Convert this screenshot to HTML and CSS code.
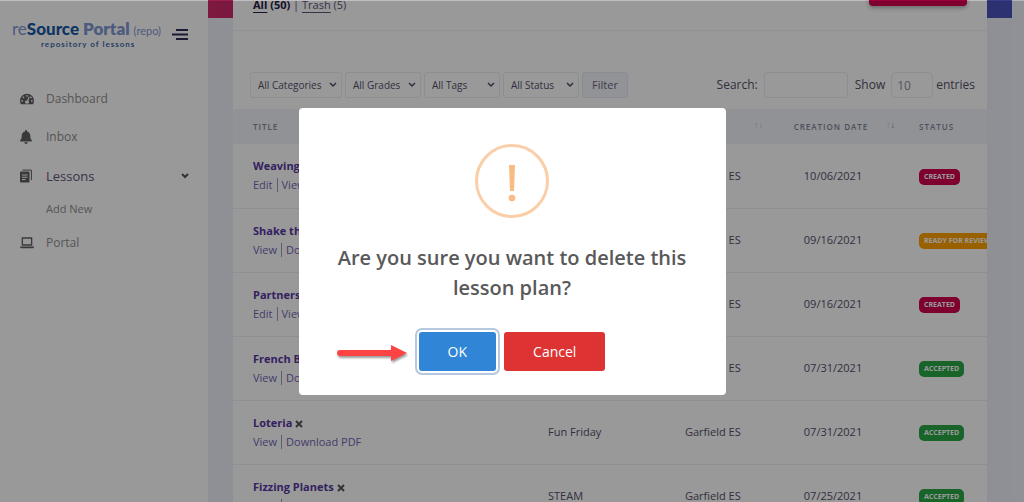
FILE: index.html
```html
<!DOCTYPE html>
<html lang="en">
<head>
    <meta charset="UTF-8">
    <meta name="viewport" content="width=device-width, initial-scale=1.0">
    <title>reSource Portal - Lessons</title>
    <link rel="stylesheet" href="styles.css">
</head>
<body>
    <div class="page">
        <aside class="sidebar">
            <div class="brand">
                <a class="logo" href="#">
                    <span class="logo-name"><span class="logo-re">re<b class="logo-source">Source</b></span><b class="logo-portal">Portal</b><span class="logo-repo">(repo)</span></span>
                    <span class="logo-tag">repository of lessons</span>
                </a>
                <button class="menu-toggle" type="button" aria-label="Toggle menu">
                    <svg width="16" height="11" viewBox="0 0 16 11"><path d="M4 1h12M0 5.500h16M4 10h12" stroke="currentColor" stroke-width="2" fill="none"/></svg>
                </button>
            </div>
            <nav class="nav">
                <a class="nav-link" href="#">
                    <svg class="nav-icon" viewBox="0 0 16 16"><path fill="currentColor" fill-rule="evenodd" d="M8 2a8 8 0 0 0-8 8c0 1.500.4 2.900 1.100 4h13.800A8 8 0 0 0 8 2zM8 3.300a1 1 0 1 1 0 2 1 1 0 0 1 0-2zM3.900 5a1 1 0 1 1 0 2 1 1 0 0 1 0-2zM2.500 9a1 1 0 1 1 0 2 1 1 0 0 1 0-2zM13.500 9a1 1 0 1 1 0 2 1 1 0 0 1 0-2zM12.500 5a1 1 0 0 1 0 2 1 1 0 0 1 0-2zM10 5l1 .4-1.500 4.800A2 2 0 0 1 9.800 13H6.200a2 2 0 0 1 2-3.200z"/></svg>
                    Dashboard
                </a>
                <a class="nav-link" href="#">
                    <svg class="nav-icon nav-icon-sm" viewBox="0 0 12 14"><path fill="currentColor" d="M6 0a1 1 0 0 1 1 1v.5c2 .4 3.300 2 3.300 4.200 0 2.600.6 3.600 1.500 4.500.4.500 0 1.300-.6 1.300H.8c-.6 0-1-.8-.6-1.300.9-.9 1.500-1.900 1.500-4.500C1.700 3.500 3 1.900 5 1.500V1a1 1 0 0 1 1-1zM4.300 12.300h3.400a1.700 1.700 0 0 1-3.400 0z"/></svg>
                    Inbox
                </a>
                <a class="nav-link nav-link-active" href="#">
                    <svg class="nav-icon nav-icon-sm" viewBox="0 0 12 13"><path d="M2.500.6h8.900v10" stroke="currentColor" fill="none"/><path fill="currentColor" fill-rule="evenodd" d="M1 2h7.500a1 1 0 0 1 1 1v9a1 1 0 0 1-1 1H1a1 1 0 0 1-1-1V3a1 1 0 0 1 1-1zM2 5v1h5.500V5zM2 7.200v1h5.500v-1zM2 9.400v1h3.500v-1z"/></svg>
                    Lessons
                    <svg class="nav-arrow" width="8" height="6" viewBox="0 0 8 6"><path d="M1 1l3 3 3-3" stroke="currentColor" stroke-width="2" fill="none"/></svg>
                </a>
                <a class="nav-sub" href="#">Add New</a>
                <a class="nav-link" href="#">
                    <svg class="nav-icon" viewBox="0 0 16 13"><path d="M2.700.8h10.600v8H2.700z" stroke="currentColor" stroke-width="1.500" fill="none"/><path fill="currentColor" d="M0 10.500h16v.7a1.300 1.300 0 0 1-1.300 1.300H1.300A1.300 1.300 0 0 1 0 11.200z"/></svg>
                    Portal
                </a>
            </nav>
        </aside>

        <main class="content">
            <section class="card">
                <header class="card-head">
                    <div class="views"><a class="current" href="#">All</a> <b>(50)</b> <span class="bar">|</span> <a href="#">Trash</a> (5)</div>
                    <button class="btn-add" type="button" aria-label="Add New Lesson"></button>
                </header>

                <form class="toolbar">
                    <div class="filters">
                        <select class="control select-wide" aria-label="Category"><option>All Categories</option></select>
                        <select class="control" aria-label="Grade"><option>All Grades</option></select>
                        <select class="control" aria-label="Tag"><option>All Tags</option></select>
                        <select class="control" aria-label="Status"><option>All Status</option></select>
                        <button class="btn-filter" type="button">Filter</button>
                    </div>
                    <div class="search">
                        <label for="search">Search:</label>
                        <input class="control control-search" id="search" type="text">
                        <label for="length">Show</label>
                        <input class="control control-length" id="length" type="text" value="10">
                        <span>entries</span>
                    </div>
                </form>

                <table class="lessons">
                    <colgroup>
                        <col>
                        <col class="col-category">
                        <col class="col-school">
                        <col class="col-date">
                        <col class="col-status">
                    </colgroup>
                    <thead>
                        <tr>
                            <th>Title</th>
                            <th>Category</th>
                            <th>School<span class="sort">↑↓</span></th>
                            <th class="date">Creation Date<span class="sort">↑<b>↓</b></span></th>
                            <th>Status</th>
                        </tr>
                    </thead>
                    <tbody>
                        <tr>
                            <td><a class="title" href="#">Weaving</a><div class="actions"><a href="#">Edit</a><a href="#">View</a></div></td>
                            <td>STEAM</td>
                            <td>Garfield ES</td>
                            <td class="date">10/06/2021</td>
                            <td><span class="badge badge-created">Created</span></td>
                        </tr>
                        <tr>
                            <td><a class="title" href="#">Shake the</a><div class="actions"><a href="#">View</a><a href="#">Download PDF</a></div></td>
                            <td></td>
                            <td>Garfield ES</td>
                            <td class="date">09/16/2021</td>
                            <td><span class="badge badge-review">Ready for review</span></td>
                        </tr>
                        <tr>
                            <td><a class="title" href="#">Partners</a><div class="actions"><a href="#">Edit</a><a href="#">View</a></div></td>
                            <td></td>
                            <td>Garfield ES</td>
                            <td class="date">09/16/2021</td>
                            <td><span class="badge badge-created">Created</span></td>
                        </tr>
                        <tr>
                            <td><a class="title" href="#">French B</a><div class="actions"><a href="#">View</a><a href="#">Download PDF</a></div></td>
                            <td>STEAM</td>
                            <td>Garfield ES</td>
                            <td class="date">07/31/2021</td>
                            <td><span class="badge badge-accepted">Accepted</span></td>
                        </tr>
                        <tr>
                            <td><a class="title" href="#">Loteria</a> <button class="remove" type="button" aria-label="Delete Loteria"><svg width="8" height="8" viewBox="0 0 8 8"><path d="M1 1l6 6M7 1L1 7" stroke="currentColor" stroke-width="2"/></svg></button><div class="actions"><a href="#">View</a><a href="#">Download PDF</a></div></td>
                            <td>Fun Friday</td>
                            <td>Garfield ES</td>
                            <td class="date">07/31/2021</td>
                            <td><span class="badge badge-accepted">Accepted</span></td>
                        </tr>
                        <tr>
                            <td><a class="title" href="#">Fizzing Planets</a> <button class="remove" type="button" aria-label="Delete Fizzing Planets"><svg width="8" height="8" viewBox="0 0 8 8"><path d="M1 1l6 6M7 1L1 7" stroke="currentColor" stroke-width="2"/></svg></button><div class="actions"><a href="#">View</a><a href="#">Download PDF</a></div></td>
                            <td>STEAM</td>
                            <td>Garfield ES</td>
                            <td class="date">07/25/2021</td>
                            <td><span class="badge badge-accepted">Accepted</span></td>
                        </tr>
                    </tbody>
                </table>
            </section>
        </main>
    </div>

    <div class="overlay">
        <div class="modal" role="dialog" aria-modal="true" aria-labelledby="modal-title">
            <svg class="modal-icon" width="74" height="74" viewBox="0 0 74 74">
                <circle cx="37" cy="37" r="35.500" fill="none" stroke="#facea8" stroke-width="3"/>
                <path d="M34 21h6l-1 26h-4z" fill="#f8bb86"/>
                <circle cx="37" cy="54" r="3.300" fill="#f8bb86"/>
            </svg>
            <h2 class="modal-title" id="modal-title">Are you sure you want to delete this lesson plan?</h2>
            <div class="modal-actions">
                <button class="btn btn-ok" type="button">OK</button>
                <button class="btn btn-cancel" type="button">Cancel</button>
            </div>
            <svg class="pointer" width="74" height="22" viewBox="0 0 74 22">
                <path d="M4 8h51V3l16 8-16 8v-5H4a3 3 0 0 1 0-6z" fill="#fd4343"/>
            </svg>
        </div>
    </div>
</body>
</html>
```

FILE: styles.css
```css
* {
    box-sizing: border-box;
}
body {
    margin: 0;
    font-family: "Open Sans", "Noto Sans", sans-serif;
    font-size: 11px;
    line-height: 16px;
    color: #54506a;
    background-color: #f1f2fa;
}
a {
    color: inherit;
    text-decoration: none;
}
button,
input,
select {
    font: inherit;
    color: inherit;
}
.page {
    display: flex;
    height: 100vh;
    overflow: hidden;
}

/* sidebar */
.sidebar {
    flex: 0 0 208px;
    background-color: #fff;
}
.brand {
    display: flex;
    align-items: center;
    gap: 12px;
    padding: 20px 12px 0;
}
.logo {
    display: flex;
    flex-direction: column;
    width: 148px;
    font-family: Lato, sans-serif;
    white-space: nowrap;
}
.logo-name {
    display: flex;
    align-items: baseline;
    gap: 4px;
    font-size: 17px;
    line-height: 18px;
    color: #7f97d3;
}
.logo-source {
    font-weight: 900;
    color: #1658a5;
}
.logo-portal {
    font-weight: 800;
}
.logo-repo {
    font-size: 11px;
}
.logo-tag {
    padding-left: 29px;
    font-size: 8px;
    font-weight: 700;
    line-height: 8px;
    letter-spacing: 1px;
    color: #3b6aa8;
}
.menu-toggle {
    display: flex;
    padding: 0;
    border: 0;
    background: none;
    color: #2a2f58;
}
.nav {
    display: flex;
    flex-direction: column;
    padding: 32px 19px 0 20px;
}
.nav-link {
    display: flex;
    align-items: center;
    gap: 12px;
    height: 38px;
    font-size: 12px;
    color: #8e8e8e;
}
.nav-icon {
    width: 14px;
    height: 14px;
    color: #606060;
}
.nav-icon-sm {
    width: 12px;
    margin-right: 2px;
}
.nav-link-active {
    height: 40px;
    font-size: 13px;
    color: #5c5679;
}
.nav-arrow {
    margin-left: auto;
    color: #55555c;
}
.nav-sub {
    padding: 5px 0 7px 26px;
    color: #8e8e8e;
}

/* scrolled content, colour band runs behind the card */
.content {
    flex: 1;
    min-width: 0;
    margin: -24px 12px 0 0;
    padding: 0 25px;
    background: linear-gradient(to right, #d1286a, #4753bd) no-repeat top / 100% 42px, #eff1fa;
}
.card {
    overflow: hidden;
    background-color: #fff;
}
.card-head {
    display: flex;
    justify-content: space-between;
    align-items: flex-start;
    height: 55px;
    padding: 0 20px;
    border-bottom: 1px solid #f2f2f7;
}
.views {
    padding-top: 21px;
    color: #5a5575;
}
.views a {
    text-decoration: underline;
    text-underline-offset: 3px;
}
.views .current,
.views b {
    font-weight: 700;
    color: #262043;
}
.btn-add {
    width: 98px;
    height: 30px;
    border: 0;
    border-radius: 4px;
    background-color: #d1004f;
    box-shadow: 0 2px 4px rgba(0, 0, 0, 0.3);
}
.toolbar {
    display: flex;
    justify-content: space-between;
    padding: 41px 12px 11px 17px;
}
.filters {
    display: flex;
    gap: 3px;
}
.search {
    display: flex;
    align-items: center;
    gap: 3px;
    font-size: 12px;
}
.search label {
    margin-right: 3px;
}
.control {
    width: 76px;
    height: 26px;
    padding: 0 8px;
    border: 1px solid #ededf4;
    border-radius: 3px;
    background-color: #fff;
}
select.control {
    appearance: none;
    padding: 0 7px;
    background: #fff url("data:image/svg+xml,%3Csvg xmlns='http://www.w3.org/2000/svg' width='8' height='6'%3E%3Cpath d='M1 1l3 3 3-3' fill='none' stroke='%23504b68' stroke-width='1.500'/%3E%3C/svg%3E") no-repeat right 4px center;
    font-size: 10px;
}
.filters .select-wide {
    width: 92px;
}
.control-search {
    width: 84px;
    margin-right: 4px;
}
.control-length {
    width: 42px;
    padding: 0 5px;
    border-radius: 5px;
    color: #8d8d96;
}
.btn-filter {
    width: 46px;
    padding: 0;
    border: 1px solid #e6e9f2;
    border-radius: 3px;
    background-color: #f3f5fa;
    color: #6a6580;
}

/* table */
.lessons {
    width: 100%;
    border-collapse: collapse;
    table-layout: fixed;
}
.col-category {
    width: 137px;
}
.col-school {
    width: 102px;
}
.col-date {
    width: 132px;
}
.col-status {
    width: 88px;
}
.lessons th {
    position: relative;
    height: 35px;
    padding: 0 0 0 20px;
    background-color: #f1f4f8;
    font-size: 8px;
    font-weight: 600;
    letter-spacing: 1px;
    text-align: left;
    text-transform: uppercase;
    white-space: nowrap;
    color: #7f879c;
}
.lessons td {
    height: 64px;
    padding: 0 0 0 20px;
    border-bottom: 1px solid #f1f1f6;
    white-space: nowrap;
}
.lessons .date {
    padding: 0;
    text-align: center;
}
.lessons th.date {
    padding-right: 4px;
}
.sort {
    position: absolute;
    top: 8px;
    right: 4px;
    font-size: 9px;
    letter-spacing: 0;
    color: #c3c8d2;
}
.sort b {
    color: #7f879c;
}
.title {
    font-weight: 700;
    color: #5636a0;
}
.remove {
    padding: 0;
    border: 0;
    background: none;
    line-height: 8px;
    color: #55555c;
}
.remove svg {
    vertical-align: -1px;
}
.actions {
    display: flex;
    align-items: baseline;
    margin-top: 3px;
    color: #7565b5;
}
.actions a + a {
    margin-left: 4px;
    padding-left: 4px;
    border-left: 1px solid #a096c8;
    line-height: 14px;
}
.badge {
    display: inline-block;
    padding: 0 5px;
    border-radius: 5px;
    font-size: 7px;
    font-weight: 700;
    text-transform: uppercase;
    color: #fff;
}
.badge-created {
    background-color: #d1004f;
}
.badge-review {
    background-color: #ffa100;
}
.badge-accepted {
    background-color: #28a745;
}

/* confirm dialog */
.overlay {
    position: fixed;
    inset: 0;
    display: flex;
    align-items: center;
    justify-content: center;
    border-top: 1px solid rgba(0, 0, 0, 0.25);
    background-color: rgba(0, 0, 0, 0.4);
    background-clip: padding-box;
}
.modal {
    position: relative;
    display: flex;
    flex-direction: column;
    align-items: center;
    width: 100%;
    max-width: 427px;
    padding: 36px 24px 24px;
    border-radius: 4px;
    background-color: #fff;
}
.modal-title {
    margin: 25px 0 0;
    font-size: 20px;
    font-weight: 600;
    line-height: 30px;
    text-align: center;
    color: #595959;
}
.modal-actions {
    display: flex;
    gap: 8px;
    margin-top: 29px;
}
.btn {
    height: 39px;
    padding: 0 29px;
    border: 0;
    border-radius: 3px;
    font-size: 14px;
    color: #fff;
}
.btn-ok {
    background-color: #3085d6;
    box-shadow: 0 0 0 2px #fff, 0 0 0 4px #b6c8e0;
}
.btn-cancel {
    background-color: #dd3333;
}
.pointer {
    position: absolute;
    left: 37px;
    bottom: 31px;
    filter: drop-shadow(1px 2px 1px rgba(0, 0, 0, 0.4));
}
```
